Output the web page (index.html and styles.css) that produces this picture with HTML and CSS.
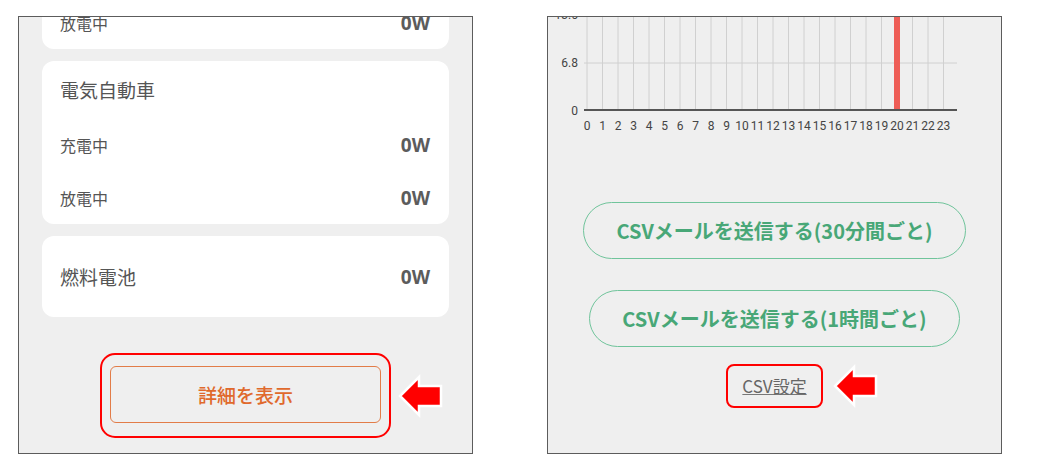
FILE: index.html
```html
<!DOCTYPE html>
<html lang="ja">
<head>
    <meta charset="UTF-8">
    <meta name="viewport" content="width=device-width, initial-scale=1.0">
    <title>エネルギー表示</title>
    <link rel="stylesheet" href="styles.css">
</head>
<body>
    <div class="screens">
        <!-- 機器ごとの電力 -->
        <section class="phone phone-status">
            <div class="card card-scrolled">
                <div class="row"><span class="label">放電中</span><span class="value">0W</span></div>
            </div>
            <div class="card">
                <div class="card-title">電気自動車</div>
                <div class="row"><span class="label">充電中</span><span class="value">0W</span></div>
                <div class="row"><span class="label">放電中</span><span class="value">0W</span></div>
            </div>
            <div class="card">
                <div class="row row-single"><span class="card-title">燃料電池</span><span class="value">0W</span></div>
            </div>
            <div class="callout callout-button">
                <button class="detail-btn">詳細を表示</button>
                <svg class="pointer" width="46" height="44" viewBox="0 0 46 44">
                    <polygon points="3,22 22,3 22,12 44,12 44,32 22,32 22,41" />
                </svg>
            </div>
        </section>

        <!-- 時間別グラフとCSV -->
        <section class="phone phone-chart">
            <svg class="chart" width="453" height="120" viewBox="0 0 453 120">
                <path class="grid" d="M36 46H409 M39 0V93 M54.5 0V93 M70 0V93 M85.5 0V93 M101 0V93 M116.5 0V93 M132 0V93 M147.5 0V93 M163 0V93 M178.5 0V93 M194 0V93 M209.5 0V93 M225 0V93 M240.5 0V93 M256 0V93 M271.5 0V93 M287 0V93 M302.5 0V93 M318 0V93 M333.5 0V93 M349 0V93 M364.5 0V93 M380 0V93 M395.5 0V93" />
                <rect class="bar" x="346" y="-2" width="6" height="95" />
                <path class="axis" d="M36 93H409" />
                <g class="y-labels">
                    <text x="30" y="2">13.6</text>
                    <text x="30" y="50">6.8</text>
                    <text x="30" y="98">0</text>
                </g>
                <g class="x-labels">
                    <text x="39" y="113">0</text>
                    <text x="54.5" y="113">1</text>
                    <text x="70" y="113">2</text>
                    <text x="85.5" y="113">3</text>
                    <text x="101" y="113">4</text>
                    <text x="116.5" y="113">5</text>
                    <text x="132" y="113">6</text>
                    <text x="147.5" y="113">7</text>
                    <text x="163" y="113">8</text>
                    <text x="178.5" y="113">9</text>
                    <text x="194" y="113">10</text>
                    <text x="209.5" y="113">11</text>
                    <text x="225" y="113">12</text>
                    <text x="240.5" y="113">13</text>
                    <text x="256" y="113">14</text>
                    <text x="271.5" y="113">15</text>
                    <text x="287" y="113">16</text>
                    <text x="302.5" y="113">17</text>
                    <text x="318" y="113">18</text>
                    <text x="333.5" y="113">19</text>
                    <text x="349" y="113">20</text>
                    <text x="364.5" y="113">21</text>
                    <text x="380" y="113">22</text>
                    <text x="395.5" y="113">23</text>
                </g>
            </svg>
            <button class="mail-btn mail-btn-first">CSVメールを送信する(30分間ごと)</button>
            <button class="mail-btn">CSVメールを送信する(1時間ごと)</button>
            <div class="callout callout-link">
                <a class="csv-link" href="#">CSV設定</a>
                <svg class="pointer pointer-far" width="46" height="44" viewBox="0 0 46 44">
                    <polygon points="3,22 22,3 22,12 44,12 44,32 22,32 22,41" />
                </svg>
            </div>
        </section>
    </div>
</body>
</html>
```

FILE: styles.css
```css
body {
    margin: 0;
    background-color: #fff;
    font-family: "Noto Sans CJK JP", sans-serif;
}
.screens {
    display: flex;
    gap: 74px;
    padding: 16px 0 0 18px;
}
.phone {
    width: 455px;
    height: 438px;
    box-sizing: border-box;
    border: 1px solid #5c5c5c;
    background-color: #efefef;
    overflow: hidden;
    display: flex;
    flex-direction: column;
}
.phone-status {
    padding: 0 23px;
}

/* カード */
.card {
    background-color: #fff;
    border-radius: 12px;
    padding: 0 19px 0 18px;
    margin-top: 12px;
}
.card-scrolled {
    margin-top: -21px;
}
.card-title {
    display: block;
    height: 57px;
    line-height: 57px;
    font-size: 19px;
    color: #555;
}
.row {
    height: 53px;
    display: flex;
    justify-content: space-between;
    align-items: center;
}
.row-single {
    height: 81px;
}
.row-single .card-title {
    height: auto;
    line-height: 1;
}
.label {
    font-size: 16px;
    color: #555;
}
.value {
    font-family: "Open Sans", sans-serif;
    font-weight: 700;
    font-size: 19px;
    color: #5c5c5c;
}

/* 赤枠の注釈 */
.callout {
    position: relative;
    align-self: center;
    border: 2px solid #ff0000;
}
.callout-button {
    margin-top: 36px;
    padding: 11px 8px 13px;
    border-radius: 15px;
}
.callout-link {
    margin-top: 17px;
    padding: 9px 14px;
    border-radius: 8px;
}
.pointer {
    position: absolute;
    top: 50%;
    left: 100%;
    margin-left: 8px;
    transform: translateY(-50%);
}
.pointer-far {
    margin-left: 11px;
}
.pointer polygon {
    fill: #ff0000;
    stroke: #fff;
    stroke-width: 2.5;
}

.detail-btn {
    display: block;
    width: 271px;
    height: 57px;
    border: 1px solid #e27c48;
    border-radius: 6px;
    background: transparent;
    color: #e0692c;
    font-family: "Noto Sans CJK JP", sans-serif;
    font-weight: 500;
    font-size: 19px;
    padding: 0;
}

/* グラフ */
.chart {
    display: block;
    flex-shrink: 0;
}
.chart .grid {
    stroke: #d0d0d0;
    stroke-width: 1;
    fill: none;
}
.chart .axis {
    stroke: #555;
    stroke-width: 2;
}
.chart .bar {
    fill: #ee5d56;
}
.chart text {
    font-family: Roboto, sans-serif;
    font-size: 12px;
    fill: #444;
}
.y-labels {
    text-anchor: end;
}
.x-labels {
    text-anchor: middle;
}

.mail-btn {
    align-self: center;
    height: 57px;
    box-sizing: border-box;
    margin-top: 31px;
    padding: 0 32px;
    border: 1.5px solid #70c49b;
    border-radius: 29px;
    background: transparent;
    color: #48a777;
    font-family: "Noto Sans CJK JP", sans-serif;
    font-weight: 700;
    font-size: 20px;
    line-height: 1;
}
.mail-btn-first {
    margin-top: 65px;
}
.csv-link {
    display: block;
    font-size: 17px;
    line-height: 22px;
    color: #666;
    text-decoration: underline;
    text-decoration-color: #777;
}
```
